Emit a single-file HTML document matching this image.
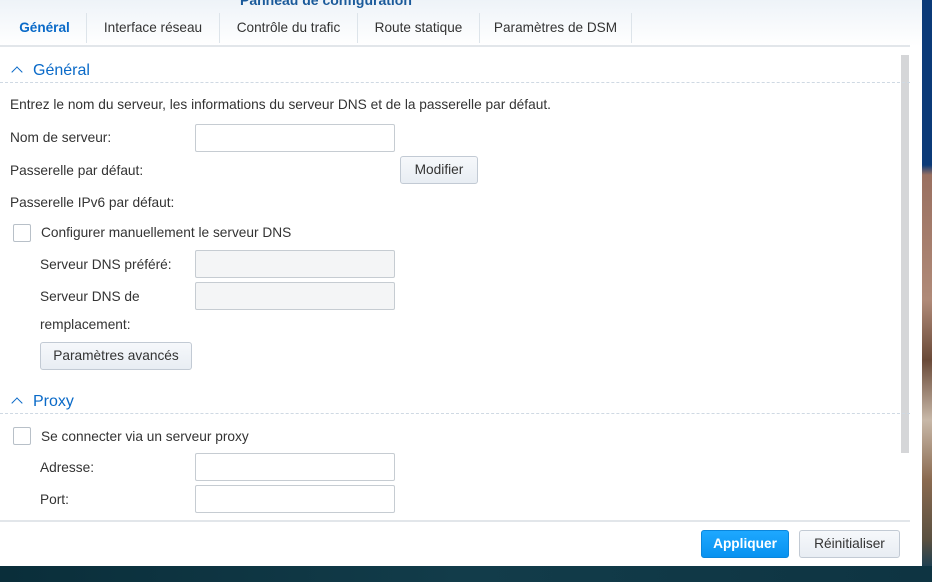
<!DOCTYPE html>
<html><head><meta charset="utf-8"><style>
*{box-sizing:border-box;margin:0;padding:0}
body{width:932px;height:582px;overflow:hidden;position:relative;font-family:"Liberation Sans",sans-serif;font-size:13.7px;color:#333;background:#0d3a4a}
.bgr{position:absolute;left:922px;top:0;width:10px;height:566px;background:linear-gradient(#0b3a78 0,#0b3a78 165px,#9a7060 175px,#b08a78 300px,#6a4a38 360px,#c8b8a8 420px,#8a6a50 480px,#5a5040 540px,#204050 566px)}
.bgb{position:absolute;left:0;top:566px;width:932px;height:16px;background:linear-gradient(90deg,#0a2e3a,#123c4a 50%,#0e3442)}
.win{position:absolute;left:0;top:0;width:922px;height:566px;background:#fff}
.head{position:absolute;left:0;top:0;width:922px;height:46px;background:linear-gradient(#eef3f8,#fff)}
.title{position:absolute;left:240px;top:-8px;font-size:14px;font-weight:bold;color:#1a5a9a}
.tabs{position:absolute;top:13px;left:3px;display:flex;height:30px}
.tab{line-height:30px;border-right:1px solid #dde4ea;font-size:13.6px;color:#333;text-align:center}
.tab.a{color:#0a6ac8;font-weight:bold}
.hl{position:absolute;left:0;top:45px;width:910px;height:2px;background:#e2e6ea}
.sb{position:absolute;left:901px;top:55px;width:8px;height:398px;background:#d5d6d8}
.sec{position:absolute;left:10px;font-size:16px;color:#0a6ac8}
.sec i{font-style:normal;display:inline-block;width:8px;height:8px;border-left:1.6px solid #0a6ac8;border-top:1.6px solid #0a6ac8;transform:rotate(45deg);margin:0 12px 0 3px;position:relative;top:1px}
.dash{position:absolute;left:0;width:910px;border-top:1px dashed #cfd9e3}
.t{position:absolute;white-space:nowrap}
.in{position:absolute;width:200px;height:28px;border:1px solid #c6ccd2;border-radius:2px;background:#fff}
.in.d{background:#f4f5f6}
.cb{position:absolute;left:13px;width:18px;height:18px;border:1px solid #b8c0c8;border-radius:2px;background:#fff}
.btn{position:absolute;height:28px;border:1px solid #c2cad4;border-radius:3px;background:linear-gradient(#f6f8fb,#e8edf3);text-align:center;line-height:26px;color:#333}
.foot{position:absolute;left:0;top:520px;width:910px;height:2px;background:#e2e6ea}
.ap{position:absolute;left:701px;top:530px;width:88px;height:28px;border-radius:3px;background:linear-gradient(#1ea8ff,#0892f0);border:1px solid #0a86dc;color:#fff;font-weight:bold;text-align:center;line-height:26px;font-size:13.7px}
</style></head><body>
<div class="bgr"></div><div class="bgb"></div>
<div class="win">
<div class="head"><div class="title">Panneau de configuration</div>
<div class="tabs"><div class="tab a" style="width:84px">Général</div><div class="tab" style="width:133px">Interface réseau</div><div class="tab" style="width:138px">Contrôle du trafic</div><div class="tab" style="width:122px">Route statique</div><div class="tab" style="width:152px">Paramètres de DSM</div></div></div>
<div class="hl"></div>
<div class="sb"></div>
<div class="sec" style="top:62px"><i></i>Général</div>
<div class="dash" style="top:82px"></div>
<div class="t" style="left:10px;top:97px">Entrez le nom du serveur, les informations du serveur DNS et de la passerelle par défaut.</div>
<div class="t" style="left:10px;top:130px">Nom de serveur:</div>
<div class="in" style="left:195px;top:124px"></div>
<div class="t" style="left:10px;top:163px">Passerelle par défaut:</div>
<div class="btn" style="left:400px;top:156px;width:78px">Modifier</div>
<div class="t" style="left:10px;top:195px">Passerelle IPv6 par défaut:</div>
<div class="cb" style="top:224px"></div>
<div class="t" style="left:41px;top:225px">Configurer manuellement le serveur DNS</div>
<div class="t" style="left:40px;top:257px">Serveur DNS préféré:</div>
<div class="in d" style="left:195px;top:250px"></div>
<div class="t" style="left:40px;top:289px">Serveur DNS de</div>
<div class="t" style="left:40px;top:317px">remplacement:</div>
<div class="in d" style="left:195px;top:282px"></div>
<div class="btn" style="left:40px;top:342px;width:152px">Paramètres avancés</div>
<div class="sec" style="top:393px"><i></i>Proxy</div>
<div class="dash" style="top:413px"></div>
<div class="cb" style="top:427px"></div>
<div class="t" style="left:41px;top:429px">Se connecter via un serveur proxy</div>
<div class="t" style="left:40px;top:460px">Adresse:</div>
<div class="in" style="left:195px;top:453px"></div>
<div class="t" style="left:40px;top:492px">Port:</div>
<div class="in" style="left:195px;top:485px"></div>
<div class="foot"></div>
<div class="ap">Appliquer</div>
<div class="btn" style="left:799px;top:530px;width:101px;font-size:13.7px">Réinitialiser</div>
</div>
</body></html>
